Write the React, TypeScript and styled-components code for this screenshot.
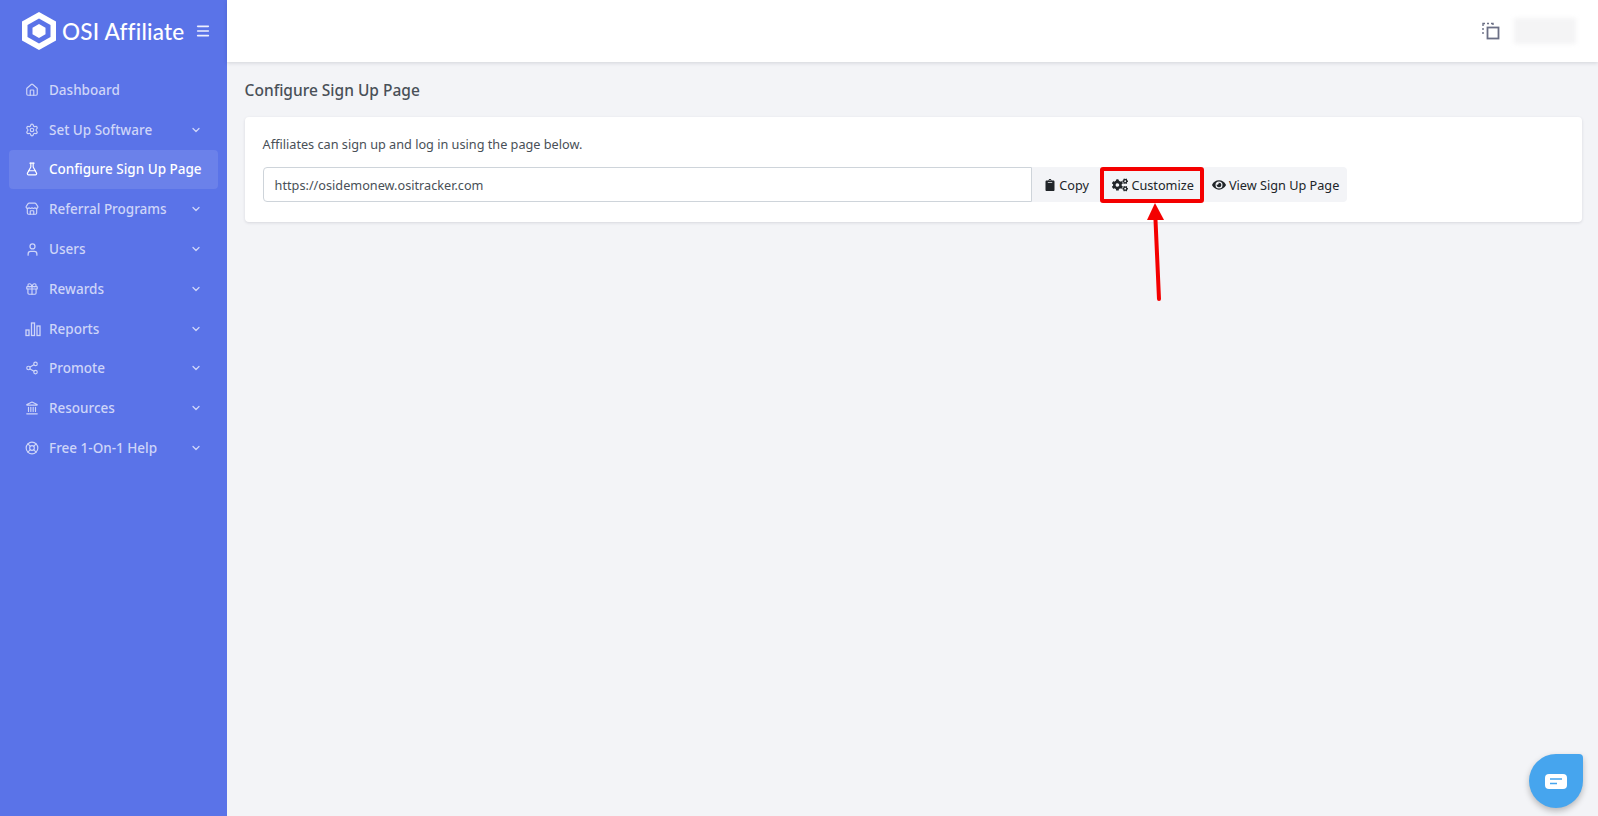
import React from "react";
import styled, { createGlobalStyle } from "styled-components";
import {
  ChevronDown,
  FlaskConical,
  Gift,
  Home,
  Landmark,
  LifeBuoy,
  Menu,
  Settings,
  Share2,
  Store,
  User,
} from "lucide-react";
import { FaClipboard, FaCogs, FaEye } from "react-icons/fa";

const fontStack = `"Noto Sans", "Open Sans", "Liberation Sans", sans-serif`;

const GlobalStyle = createGlobalStyle`
  html, body {
    margin: 0;
    padding: 0;
    height: 100%;
    overflow: hidden;
    background: #f3f4f7;
    font-family: ${fontStack};
  }
  * {
    box-sizing: border-box;
  }
`;

const Page = styled.div`
  position: relative;
  display: flex;
  width: 1598px;
  height: 816px;
  overflow: hidden;
`;

const Sidebar = styled.aside`
  flex: 0 0 225px;
  background: #5a73e8;
  padding: 0 9px;
`;

const Brand = styled.div`
  display: flex;
  align-items: center;
  height: 62px;
  padding-left: 13px;
  color: #fff;
`;

const BrandName = styled.span`
  margin-left: 6px;
  font-family: "Lato", sans-serif;
  font-size: 22.5px;
  font-weight: 500;
  letter-spacing: 0.2px;
  white-space: nowrap;
`;

const Burger = styled.span`
  display: flex;
  margin-left: 11px;
  color: #eef0fd;
`;

const Nav = styled.nav`
  display: flex;
  flex-direction: column;
  margin-top: 8px;
`;

const NavItem = styled.div<{ $active?: boolean }>`
  display: flex;
  align-items: center;
  height: 39.8px;
  padding: 0 16px;
  border-radius: 4px;
  font-size: 13.5px;
  font-weight: 500;
  color: ${(p) => (p.$active ? "#fff" : "#ced5f8")};
  background: ${(p) => (p.$active ? "#6b81ea" : "transparent")};
`;

const NavIcon = styled.span`
  display: flex;
  flex: 0 0 24px;
`;

const NavLabel = styled.span`
  flex: 1;
  white-space: nowrap;
`;

const Main = styled.div`
  flex: 1;
  display: flex;
  flex-direction: column;
  min-width: 0;
`;

const Topbar = styled.header`
  display: flex;
  align-items: center;
  justify-content: flex-end;
  gap: 14px;
  height: 62px;
  padding-right: 22px;
  background: #fff;
  box-shadow: 0 1px 4px rgba(40, 45, 70, 0.16);
`;

const BlurredUser = styled.div`
  width: 62px;
  height: 26px;
  background: #f4f4f5;
  filter: blur(2px);
`;

const Content = styled.main`
  padding: 18px 16px 0 18px;
`;

const Title = styled.h1`
  margin: 0 0 17px;
  font-size: 15.5px;
  line-height: 20px;
  font-weight: 500;
  color: #495057;
`;

const Card = styled.section`
  height: 105px;
  padding: 18px;
  background: #fff;
  border-radius: 4px;
  box-shadow: 0 1px 3px rgba(40, 45, 70, 0.14);
`;

const Lead = styled.p`
  margin: 0 0 14px;
  font-size: 12.7px;
  line-height: 18px;
  color: #495057;
`;

const UrlRow = styled.div`
  display: flex;
  align-items: stretch;
  height: 35px;
`;

const UrlInput = styled.div`
  flex: 0 0 769px;
  display: flex;
  align-items: center;
  padding: 0 11px;
  font-size: 12.7px;
  color: #495057;
  border: 1px solid #ced4da;
  border-radius: 4px 0 0 4px;
`;

const Actions = styled.div`
  display: flex;
  background: #f3f4f7;
  border-radius: 0 4px 4px 0;
`;

const Action = styled.div<{ $width: number }>`
  display: flex;
  align-items: center;
  justify-content: center;
  gap: 3px;
  width: ${(p) => p.$width}px;
  font-size: 12.7px;
  color: #212529;
  white-space: nowrap;
`;

const Annotation = styled.svg`
  position: absolute;
  left: 0;
  top: 0;
  pointer-events: none;
`;

const ChatBubble = styled.div`
  position: absolute;
  left: 1529px;
  top: 754px;
  display: flex;
  align-items: center;
  justify-content: center;
  width: 54px;
  height: 54px;
  background: #46a5ee;
  border-radius: 50% 4px 50% 50%;
  box-shadow: 0 3px 6px rgba(0, 0, 0, 0.25);
`;

const BarsIcon = () => (
  <svg width="16" height="16" viewBox="0 0 16 16" fill="none" stroke="currentColor" strokeWidth="1.3">
    <rect x="1" y="9" width="3" height="5.5" />
    <rect x="6.5" y="2" width="3" height="12.5" />
    <rect x="12" y="5" width="3" height="9.5" />
  </svg>
);

const items = [
  { label: "Dashboard", icon: <Home size={14} />, arrow: false },
  { label: "Set Up Software", icon: <Settings size={14} />, arrow: true },
  { label: "Configure Sign Up Page", icon: <FlaskConical size={14} />, arrow: false, active: true },
  { label: "Referral Programs", icon: <Store size={14} />, arrow: true },
  { label: "Users", icon: <User size={15} />, arrow: true },
  { label: "Rewards", icon: <Gift size={14} />, arrow: true },
  { label: "Reports", icon: <BarsIcon />, arrow: true },
  { label: "Promote", icon: <Share2 size={14} />, arrow: true },
  { label: "Resources", icon: <Landmark size={14} />, arrow: true },
  { label: "Free 1-On-1 Help", icon: <LifeBuoy size={14} />, arrow: true },
];

export default function App() {
  return (
    <Page>
      <GlobalStyle />
      <Sidebar>
        <Brand>
          <svg width="34" height="38" viewBox="0 0 34 38">
            <path d="M17 0 L34 9.5 V28.5 L17 38 L0 28.5 V9.5 Z" fill="#fff" />
            <path d="M17 6.5 L28.5 13 V25 L17 31.5 L5.5 25 V13 Z" fill="#5a73e8" />
            <path d="M17 12 L23.5 15.7 V22.3 L17 26 L10.5 22.3 V15.7 Z" fill="#fff" />
          </svg>
          <BrandName>OSI Affiliate</BrandName>
          <Burger>
            <Menu size={16} strokeWidth={2.4} />
          </Burger>
        </Brand>
        <Nav>
          {items.map((item) => (
            <NavItem key={item.label} $active={item.active}>
              <NavIcon>{item.icon}</NavIcon>
              <NavLabel>{item.label}</NavLabel>
              {item.arrow && <ChevronDown size={12} strokeWidth={2.6} />}
            </NavItem>
          ))}
        </Nav>
      </Sidebar>
      <Main>
        <Topbar>
          <svg width="18" height="18" viewBox="0 0 18 18" fill="none" stroke="#6b6f85">
            <path d="M1 12V10M1 8V6M1 4V1.5H3M5 1.5H7M9 1.5H11V3" strokeWidth="1.4" />
            <rect x="5.5" y="5.5" width="11" height="11" strokeWidth="1.8" />
          </svg>
          <BlurredUser />
        </Topbar>
        <Content>
          <Title>Configure Sign Up Page</Title>
          <Card>
            <Lead>Affiliates can sign up and log in using the page below.</Lead>
            <UrlRow>
              <UrlInput>https://osidemonew.ositracker.com</UrlInput>
              <Actions>
                <Action $width={70}>
                  <FaClipboard size={12} />
                  Copy
                </Action>
                <Action $width={103}>
                  <FaCogs size={16} />
                  Customize
                </Action>
                <Action $width={142}>
                  <FaEye size={14} />
                  View Sign Up Page
                </Action>
              </Actions>
            </UrlRow>
          </Card>
        </Content>
      </Main>
      <Annotation width="1598" height="816" viewBox="0 0 1598 816">
        <rect x="1102" y="169" width="100" height="32" rx="1" fill="none" stroke="#f40000" strokeWidth="4" />
        <path d="M1159 299 L1155.500 220" stroke="#f40000" strokeWidth="4" strokeLinecap="round" />
        <path d="M1155 203 L1147 220 H1164 Z" fill="#f40000" />
      </Annotation>
      <ChatBubble>
        <svg width="22" height="15" viewBox="0 0 22 15">
          <rect width="22" height="15" rx="4" fill="#fff" />
          <path d="M5 5H17M5 9.500H12" stroke="#46a5ee" strokeWidth="1.4" />
        </svg>
      </ChatBubble>
    </Page>
  );
}
